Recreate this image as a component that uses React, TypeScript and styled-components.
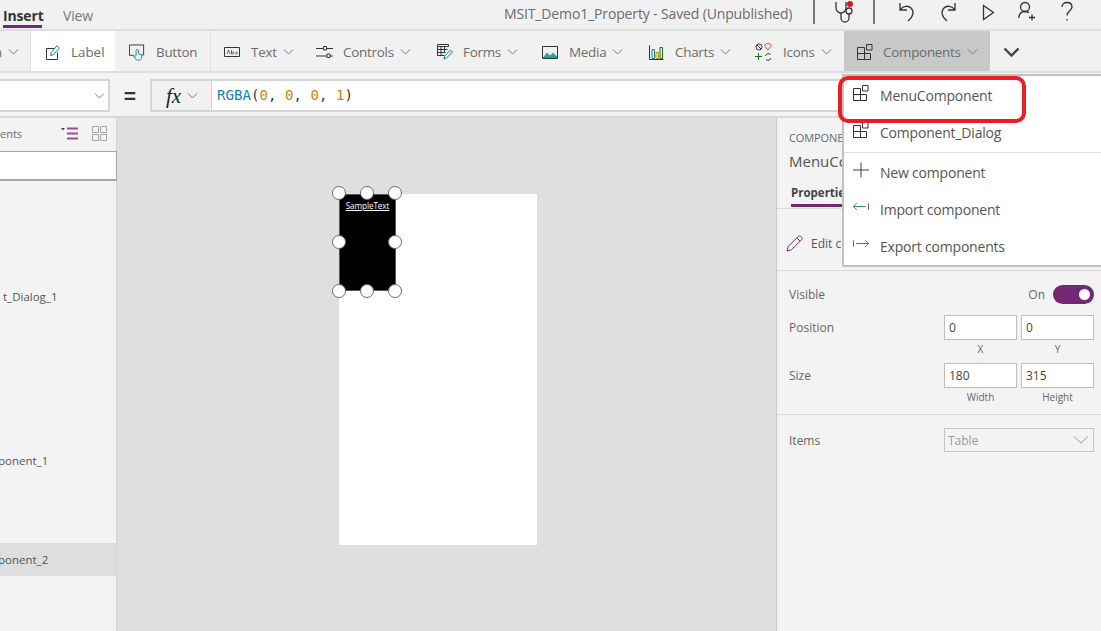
import React from "react";
import styled, { createGlobalStyle } from "styled-components";

const Global = createGlobalStyle`
  html, body { margin: 0; padding: 0; width: 1101px; height: 631px; overflow: hidden; background: #f3f3f3; }
  * { box-sizing: border-box; }
  body { font-family: "Open Sans", "Noto Sans", "Liberation Sans", sans-serif; color: #444; }
`;

const Page = styled.div`
  position: relative; width: 1101px; height: 631px; overflow: hidden;
  display: flex; flex-direction: column; background: #f3f3f3;
`;
const TopBar = styled.div`
  height: 31px; flex: none; display: flex; align-items: stretch; border-bottom: 2px solid #dedede; background: #f1f1f1;
`;
const Tab = styled.div<{ $active?: boolean; $w: number }>`
  width: ${p => p.$w}px; height: 28px; margin-right: 21px; margin-left: ${p => (p.$active ? 3 : 0)}px;
  font-size: 14px; line-height: 31px; white-space: nowrap; letter-spacing: -0.15px;
  color: ${p => (p.$active ? "#333" : "#777")}; font-weight: ${p => (p.$active ? 700 : 400)};
  border-bottom: ${p => (p.$active ? "3px solid #742774" : "none")};
`;
const Title = styled.div`
  margin-left: auto; width: 309px; font-size: 14px; line-height: 28px; color: #6b6b6b; white-space: nowrap; letter-spacing: -0.14px;
`;
const Divider = styled.div<{ $h: number; $ml?: number }>`
  width: 2px; height: ${p => p.$h}px; margin-left: ${p => p.$ml ?? 0}px; background: #7a7a7a; flex: none;
`;
const TopIcons = styled.div`
  display: flex; align-items: flex-start; width: 288px; height: 28px;
`;
const TopIcon = styled.svg<{ $ml: number }>`
  flex: none; margin-left: ${p => p.$ml}px; margin-top: 1px; fill: none; stroke: #333; stroke-width: 1.3;
`;
const Toolbar = styled.div`
  height: 42px; flex: none; display: flex; align-items: stretch; border-bottom: 2px solid #dedede; background: #f1f1f1;
`;
const ClipSeg = styled.div`
  width: 31px; flex: none; display: flex; align-items: center; padding: 2px 13px 0 0; border-right: 1px solid #dedede; overflow: hidden;
  font-size: 13.4px; color: #6b6b6b;
`;
const ClipText = styled.span`
  margin-left: -6px; margin-right: auto;
`;
const WhiteGroup = styled.div`
  width: 84px; flex: none; display: flex; align-items: center; padding: 2px 0 0 15px; background: #fff;
  font-size: 13.4px; color: #6b6b6b;
`;
const ToolItem = styled.div<{ $w: number; $pl: number; $active?: boolean; $sep?: boolean }>`
  width: ${p => p.$w}px; flex: none; display: flex; align-items: center; padding: 2px 0 0 ${p => p.$pl}px;
  font-size: 13.4px; letter-spacing: -0.25px; color: #6b6b6b; white-space: nowrap;
  background: ${p => (p.$active ? "#c8c8c8" : "transparent")};
  border-right: ${p => (p.$sep ? "1px solid #dedede" : "none")};
`;
const ToolText = styled.span<{ $ml: number }>`
  margin-left: ${p => p.$ml}px;
`;
const ToolIcon = styled.svg`
  flex: none; fill: none; stroke: #333; stroke-width: 1;
`;
const Chevron = styled.svg`
  flex: none; fill: none; stroke: #444; stroke-width: 2.4;
`;
const Caret = styled.svg`
  flex: none; margin-left: 6px; fill: none; stroke: #777; stroke-width: 1;
`;
const FormulaRow = styled.div`
  height: 45px; flex: none; display: flex; align-items: flex-start; padding-top: 6px; border-bottom: 2px solid #d9d9d9; background: #f3f3f3;
`;
const PropSelect = styled.div`
  width: 110px; height: 33px; flex: none; background: #fff; border: 2px solid #d5d5d5; border-left: none;
  display: flex; align-items: center; justify-content: flex-end; padding-right: 3px;
`;
const Equals = styled.div`
  width: 40px; flex: none; text-align: center; font-family: "Liberation Sans", sans-serif; font-size: 21px; font-weight: 700; line-height: 33px; color: #333;
`;
const FxBox = styled.div`
  width: 62px; height: 33px; flex: none; border: 2px solid #d5d5d5; border-right: 1px solid #d5d5d5; display: flex; align-items: center; padding-left: 14px;
  background: #f1f1f1;
`;
const Fx = styled.span`
  font-family: "Liberation Serif", serif; font-style: italic; font-size: 21px; color: #222; line-height: 30px;
`;
const Formula = styled.div`
  flex: 1; height: 33px; background: #fff; border: 2px solid #d5d5d5; border-left: none; border-right: none; padding-left: 5px;
  font-family: "DejaVu Sans Mono", "Liberation Mono", monospace; font-size: 14.1px; line-height: 29px; color: #333;
`;
const Fn = styled.span`color: #0f84b5;`;
const Num = styled.span`color: #c8860a;`;

const Body = styled.div`
  flex: 1; display: flex; min-height: 0;
`;
const LeftPanel = styled.div`
  width: 117px; flex: none; background: #f3f3f3; border-right: 1px solid #d5d5d5; display: flex; flex-direction: column;
`;
const PanelHead = styled.div`
  height: 33px; flex: none; display: flex; align-items: center; padding: 0 9px 2px 0; font-size: 11px; color: #6b6b6b;
`;
const PanelLabel = styled.span`
  margin-left: 0; margin-right: auto;
`;
const ListIcon = styled.svg`
  flex: none; margin-right: 13px;
`;
const Search = styled.div`
  height: 30px; flex: none; width: 117px; background: #fff; border: 1px solid #a6a6a6; border-bottom: 2px solid #a6a6a6; border-left: none;
`;
const TreeRow = styled.div<{ $top: number; $selected?: boolean }>`
  height: 33px; flex: none; margin-top: ${p => p.$top}px; display: flex; align-items: center; overflow: hidden;
  font-size: 11.5px; color: #555; white-space: nowrap; background: ${p => (p.$selected ? "#dedede" : "transparent")};
`;
const TreeText = styled.span<{ $ml: number }>`
  margin-left: ${p => p.$ml}px;
`;
const Canvas = styled.div`
  flex: 1; background: #dfdfdf; padding: 76px 0 0 222px;
`;
const Screen = styled.div`
  position: relative; width: 198px; height: 351px; background: #fff;
`;
const Selected = styled.div`
  position: absolute; left: 0; top: 0; width: 57px; height: 97px; background: #000; border: 1px solid #555;
  color: #fff; font-size: 8.2px; text-align: center; text-decoration: underline; line-height: 12px; padding-top: 5px;
  letter-spacing: -0.1px;
`;
const Handle = styled.div<{ $x: number; $y: number }>`
  position: absolute; left: ${p => p.$x - 7}px; top: ${p => p.$y - 7}px; width: 14px; height: 14px; border-radius: 50%;
  background: #fff; border: 1.5px solid #6a6a6a;
`;
const RightPanel = styled.div`
  width: 325px; flex: none; background: #f3f3f3; border-left: 1px solid #c8c8c8; display: flex; flex-direction: column;
`;
const CompHead = styled.div`
  height: 91px; flex: none; padding: 12px 0 0 12px; border-bottom: 1px solid #d9d9d9; overflow: hidden;
`;
const CompKind = styled.div`
  font-size: 11px; line-height: 15px; color: #6b6b6b; letter-spacing: -0.1px;
`;
const CompName = styled.div`
  font-size: 15px; line-height: 20px; margin-top: 6px; color: #555;
`;
const PropTab = styled.div`
  display: block; width: 52px; margin: 14px 0 0 2px; height: 22px; font-size: 11.5px; font-weight: 700; color: #444; line-height: 16px;
  border-bottom: 3px solid #742774; white-space: nowrap; overflow: hidden;
`;
const EditRow = styled.div`
  height: 62px; flex: none; display: flex; align-items: center; padding: 8px 0 0 9px; gap: 8px; font-size: 12px; color: #555; border-bottom: 1px solid #d9d9d9;
`;
const PropList = styled.div`
  padding: 0 7px 0 12px; flex: none; height: 144px; border-bottom: 1px solid #d9d9d9; display: flex; flex-direction: column;
`;
const PropRow = styled.div<{ $h: number; $top?: number }>`
  height: ${p => p.$h}px; margin-top: ${p => p.$top ?? 0}px; flex: none; display: flex; justify-content: space-between; align-items: flex-start; font-size: 12px; color: #666;
`;
const PropName = styled.div`
  font-size: 12px; line-height: 25px;
`;
const ToggleWrap = styled.div`
  display: flex; align-items: center; gap: 8px; font-size: 12px; line-height: 25px; color: #666;
`;
const Toggle = styled.div`
  width: 41px; height: 19px; border-radius: 10px; background: #742774; display: flex; align-items: center; justify-content: flex-end; padding-right: 4px;
`;
const Knob = styled.div`
  width: 11px; height: 11px; border-radius: 50%; background: #fff;
`;
const Pair = styled.div`
  display: flex; gap: 4px;
`;
const FieldCol = styled.div`
  width: 73px; display: flex; flex-direction: column; align-items: center;
`;
const Field = styled.div`
  width: 73px; height: 25px; background: #fff; border: 1px solid #bdbdbd; font-size: 12px; line-height: 23px; padding-left: 4px; color: #444;
`;
const FieldCaption = styled.div`
  font-size: 10px; line-height: 14px; margin-top: 2px; color: #666;
`;
const ItemsRow = styled.div`
  padding: 13px 7px 0 12px; display: flex; justify-content: space-between; align-items: center; font-size: 12px; color: #666;
`;
const ItemsSelect = styled.div`
  width: 150px; height: 24px; border: 1px solid #c4c4c4; display: flex; justify-content: space-between; align-items: center; padding: 0 4px 0 3px; color: #9a9a9a;
`;
const Menu = styled.div`
  position: absolute; left: 842px; top: 74px; width: 259px; height: 193px; background: #fff; border: 2px solid #c2c2c2; border-right: none;
  display: flex; flex-direction: column; padding-top: 1px;
`;
const MenuItem = styled.div<{ $h: number }>`
  height: ${p => p.$h}px; flex: none; display: flex; align-items: center; padding-left: 9px; gap: 11px;
  font-size: 14px; color: #555; white-space: nowrap; letter-spacing: -0.2px;
`;
const MenuIcon = styled.svg`
  flex: none; margin-bottom: 6px; fill: none; stroke: #333; stroke-width: 1;
`;
const MenuSep = styled.div`
  height: 1px; flex: none; background: #dcdcdc; margin: 1px 0;
`;
const Highlight = styled.div`
  position: absolute; left: 838px; top: 76px; width: 188px; height: 47px; border: 4px solid #ec1c24; border-radius: 10px;
`;

const CaretIcon = () => (
  <Caret width="11" height="6" viewBox="0 0 11 6"><path d="M1 .5l4.500 4.500L10 .5" /></Caret>
);
const CompPath = () => (
  <path d="M.5 3.500h7v12h-7zM.5 9.500h13v6h-6M9.500.5h5.500v5.500H9.500z" />
);

export default function App() {
  return (
    <Page>
      <Global />
      <TopBar>
        <Tab $active $w={39}>Insert</Tab>
        <Tab $w={32}>View</Tab>
        <Title>MSIT_Demo1_Property - Saved (Unpublished)</Title>
        <TopIcons>
          <Divider $h={24} />
          <TopIcon $ml={20} width="20" height="24" viewBox="0 0 20 24">
            <path d="M1 1v6a5 5 0 0 0 10 0V1M6 12v5a4 4 0 0 0 8 0v-4" />
            <circle cx="14" cy="10" r="3" />
            <circle cx="15" cy="3" r="3" fill="#e81123" stroke="none" />
          </TopIcon>
          <Divider $h={24} $ml={18} />
          <TopIcon $ml={24} width="18" height="22" viewBox="0 0 18 22">
            <path d="M1 2v7h7M1 9c3-4 8-5 11-2 3 3 3 8-3 13" />
          </TopIcon>
          <TopIcon $ml={21} width="18" height="22" viewBox="0 0 18 22">
            <path d="M17 2v7h-7M17 9c-3-4-8-5-11-2-3 3-3 8 3 13" />
          </TopIcon>
          <TopIcon $ml={26} width="13" height="22" viewBox="0 0 13 22">
            <path d="M1.500 4.500l10 7-10 7z" />
          </TopIcon>
          <TopIcon $ml={23} width="17" height="22" viewBox="0 0 17 22">
            <circle cx="7" cy="6" r="4.500" /><path d="M.7 17c.4-4 3-6.500 6.300-6.500 1.500 0 2.800.4 3.800 1.300M11 16.500h6M14 13.500v6" />
          </TopIcon>
          <TopIcon $ml={26} width="12" height="22" viewBox="0 0 12 22">
            <path d="M1 6c0-3 2-4.500 5-4.500s5 1.800 5 4.500c0 3.500-5 4-5 8.500M6 18v1.500" />
          </TopIcon>
        </TopIcons>
      </TopBar>

      <Toolbar>
        <ClipSeg><ClipText>n</ClipText><CaretIcon /></ClipSeg>
        <WhiteGroup>
          <ToolIcon width="14" height="15" viewBox="0 0 14 15">
            <path d="M.5 3.500h8M.5 3.500v11h11v-7" /><path d="M4.500 10.500l.7-3L11 .8l2.300 2.300-6 6.700z" stroke="#0e8a8a" />
          </ToolIcon>
          <ToolText $ml={11}>Label</ToolText>
        </WhiteGroup>
        <ToolItem $w={96} $pl={14} $sep>
          <ToolIcon width="17" height="17" viewBox="0 0 18 17">
            <path d="M5 11.500H.5V.5h15v10.500h-2" />
            <path d="M7.500 12V6.500a1.200 1.200 0 0 1 2.500 0V10l3.500 1v3c0 1-1 2.500-2.500 2.500H9c-1.500 0-2-1-4-4 1-1 2 0 2.500.5" stroke="#0e8a8a" />
          </ToolIcon>
          <ToolText $ml={10}>Button</ToolText>
        </ToolItem>
        <ToolItem $w={94} $pl={13}>
          <ToolIcon width="16" height="10" viewBox="0 0 16 10">
            <path d="M.5.500h15v9H.5z" /><path d="M3 7l1.500-4L6 7M7.500 3v4h1.500a1 1 0 0 0 0-2h-1.500M13.500 5.200h-1.500v1.800h1.500" strokeWidth=".7" />
          </ToolIcon>
          <ToolText $ml={11}>Text</ToolText><CaretIcon />
        </ToolItem>
        <ToolItem $w={121} $pl={11}>
          <ToolIcon width="17" height="14" viewBox="0 0 17 14">
            <path d="M0 3.500h7.500M10.500 3.500H17M7.500 1.500h3v3.500h-3zM0 11h11M14 11h3M11 9h3v3.500h-3z" />
          </ToolIcon>
          <ToolText $ml={10}>Controls</ToolText><CaretIcon />
        </ToolItem>
        <ToolItem $w={105} $pl={11}>
          <ToolIcon width="16" height="16" viewBox="0 0 16 16">
            <path d="M.5.500h11v2H.5zM.5 2.500v9h7M.5 5.500h10M.5 8.500h8M4 2.500v9M7.500 2.500v6" />
            <path d="M7 15l.7-3 5.800-6 2 2-6 6z" stroke="#0e8a8a" />
          </ToolIcon>
          <ToolText $ml={10}>Forms</ToolText><CaretIcon />
        </ToolItem>
        <ToolItem $w={107} $pl={11}>
          <ToolIcon width="16" height="13" viewBox="0 0 16 13">
            <path d="M.5.500h15v12H.5z" /><path d="M1 11.500l4-5 3 3 3-3 4 4v1.500H1z" fill="#2aa198" stroke="none" />
          </ToolIcon>
          <ToolText $ml={11}>Media</ToolText><CaretIcon />
        </ToolItem>
        <ToolItem $w={106} $pl={11}>
          <ToolIcon width="15" height="15" viewBox="0 0 15 15">
            <path d="M.5.500v14h14" />
            <path d="M3 4.500h2.500v9H3z" stroke="#0e8a8a" /><path d="M7 7.500h2.500v6H7z" stroke="#c8860a" /><path d="M11 2.500h2.500v11H11z" stroke="#107c10" />
          </ToolIcon>
          <ToolText $ml={11}>Charts</ToolText><CaretIcon />
        </ToolItem>
        <ToolItem $w={100} $pl={11}>
          <ToolIcon width="18" height="18" viewBox="0 0 18 18">
            <circle cx="4" cy="4" r="3" /><path d="M2 2l4 4" />
            <path d="M13 7l-3-3.500a2 2 0 0 1 3-2.500 2 2 0 0 1 3 2.500z" stroke="#e8590c" />
            <path d="M0 13.500h7M3.500 10v7" stroke="#107c10" />
            <path d="M10.500 13a3 3 0 0 1 5-1.500M16 15a3 3 0 0 1-5 1.500" />
          </ToolIcon>
          <ToolText $ml={10}>Icons</ToolText><CaretIcon />
        </ToolItem>
        <ToolItem $w={146} $pl={13} $active>
          <ToolIcon width="16" height="16" viewBox="0 0 16 16"><CompPath /></ToolIcon>
          <ToolText $ml={10}>Components</ToolText><CaretIcon />
        </ToolItem>
        <ToolItem $w={40} $pl={13}>
          <Chevron width="17" height="10" viewBox="0 0 16 10"><path d="M1 1.500l7 7 7-7" /></Chevron>
        </ToolItem>
      </Toolbar>

      <FormulaRow>
        <PropSelect><CaretIcon /></PropSelect>
        <Equals>=</Equals>
        <FxBox><Fx>fx</Fx><CaretIcon /></FxBox>
        <Formula>
          <Fn>RGBA</Fn>(<Num>0</Num>, <Num>0</Num>, <Num>0</Num>, <Num>1</Num>)
        </Formula>
      </FormulaRow>

      <Body>
        <LeftPanel>
          <PanelHead>
            <PanelLabel>ents</PanelLabel>
            <ListIcon width="18" height="13" viewBox="0 0 18 13">
              <path d="M0 1h4L2 3.500z" fill="#742774" />
              <path d="M6 1.500h11M6 6.500h11M6 11.500h11" stroke="#9b4f96" strokeWidth="2" fill="none" />
            </ListIcon>
            <svg width="15" height="15" viewBox="0 0 15 15" fill="none" stroke="#a6a6a6">
              <path d="M.5.500h6v6h-6zM8.500.500h6v6h-6zM.5 8.500h6v6h-6zM8.500 8.500h6v6h-6z" />
            </svg>
          </PanelHead>
          <Search />
          <TreeRow $top={99}><TreeText $ml={3}>t_Dialog_1</TreeText></TreeRow>
          <TreeRow $top={131}><TreeText $ml={-2}>ponent_1</TreeText></TreeRow>
          <TreeRow $top={66} $selected><TreeText $ml={-2}>ponent_2</TreeText></TreeRow>
        </LeftPanel>

        <Canvas>
          <Screen>
            <Selected>SampleText</Selected>
            <Handle $x={0} $y={-1} /><Handle $x={28} $y={-1} /><Handle $x={56} $y={-1} />
            <Handle $x={0} $y={48} /><Handle $x={56} $y={48} />
            <Handle $x={0} $y={97} /><Handle $x={28} $y={97} /><Handle $x={56} $y={97} />
          </Screen>
        </Canvas>

        <RightPanel>
          <CompHead>
            <CompKind>COMPONENT</CompKind>
            <CompName>MenuComponent</CompName>
            <PropTab>Properties</PropTab>
          </CompHead>
          <EditRow>
            <svg width="17" height="17" viewBox="0 0 17 17" fill="none" stroke="#742774">
              <path d="M1 16l1.200-4.500L12.500 1.200a1.500 1.500 0 0 1 2 0l1.300 1.300a1.500 1.500 0 0 1 0 2L5.500 14.800zM11 3l3 3" />
            </svg>
            <span>Edit component</span>
          </EditRow>
          <PropList>
            <PropRow $h={33} $top={11}>
              <PropName>Visible</PropName>
              <ToggleWrap>On<Toggle><Knob /></Toggle></ToggleWrap>
            </PropRow>
            <PropRow $h={48}>
              <PropName>Position</PropName>
              <Pair>
                <FieldCol><Field>0</Field><FieldCaption>X</FieldCaption></FieldCol>
                <FieldCol><Field>0</Field><FieldCaption>Y</FieldCaption></FieldCol>
              </Pair>
            </PropRow>
            <PropRow $h={47}>
              <PropName>Size</PropName>
              <Pair>
                <FieldCol><Field>180</Field><FieldCaption>Width</FieldCaption></FieldCol>
                <FieldCol><Field>315</Field><FieldCaption>Height</FieldCaption></FieldCol>
              </Pair>
            </PropRow>
          </PropList>
          <ItemsRow>
            <span>Items</span>
            <ItemsSelect>
              <span>Table</span>
              <svg width="16" height="8" viewBox="0 0 16 8" fill="none" stroke="#999"><path d="M1 .5l7 6.500 7-6.500" /></svg>
            </ItemsSelect>
          </ItemsRow>
        </RightPanel>
      </Body>

      <Menu>
        <MenuItem $h={37}>
          <MenuIcon width="16" height="16" viewBox="0 0 16 16"><CompPath /></MenuIcon>MenuComponent
        </MenuItem>
        <MenuItem $h={37}>
          <MenuIcon width="16" height="16" viewBox="0 0 16 16"><CompPath /></MenuIcon>Component_Dialog
        </MenuItem>
        <MenuSep />
        <MenuItem $h={37}>
          <MenuIcon width="16" height="16" viewBox="0 0 17 16"><path d="M8.500 0v16M0 8h17" /></MenuIcon>New component
        </MenuItem>
        <MenuItem $h={37}>
          <MenuIcon width="16" height="16" viewBox="0 0 17 16"><path d="M.5 7.500h13M4 4L.5 7.500 4 11" stroke="#0e8a8a" /><path d="M16.500 4v7" stroke="#555" /></MenuIcon>Import component
        </MenuItem>
        <MenuItem $h={37}>
          <MenuIcon width="16" height="16" viewBox="0 0 17 16"><path d="M3 7.500h13.500M13 4l3.500 3.500L13 11" stroke="#0e8a8a" /><path d="M.5 4v7" stroke="#555" /></MenuIcon>Export components
        </MenuItem>
      </Menu>
      <Highlight />
    </Page>
  );
}
